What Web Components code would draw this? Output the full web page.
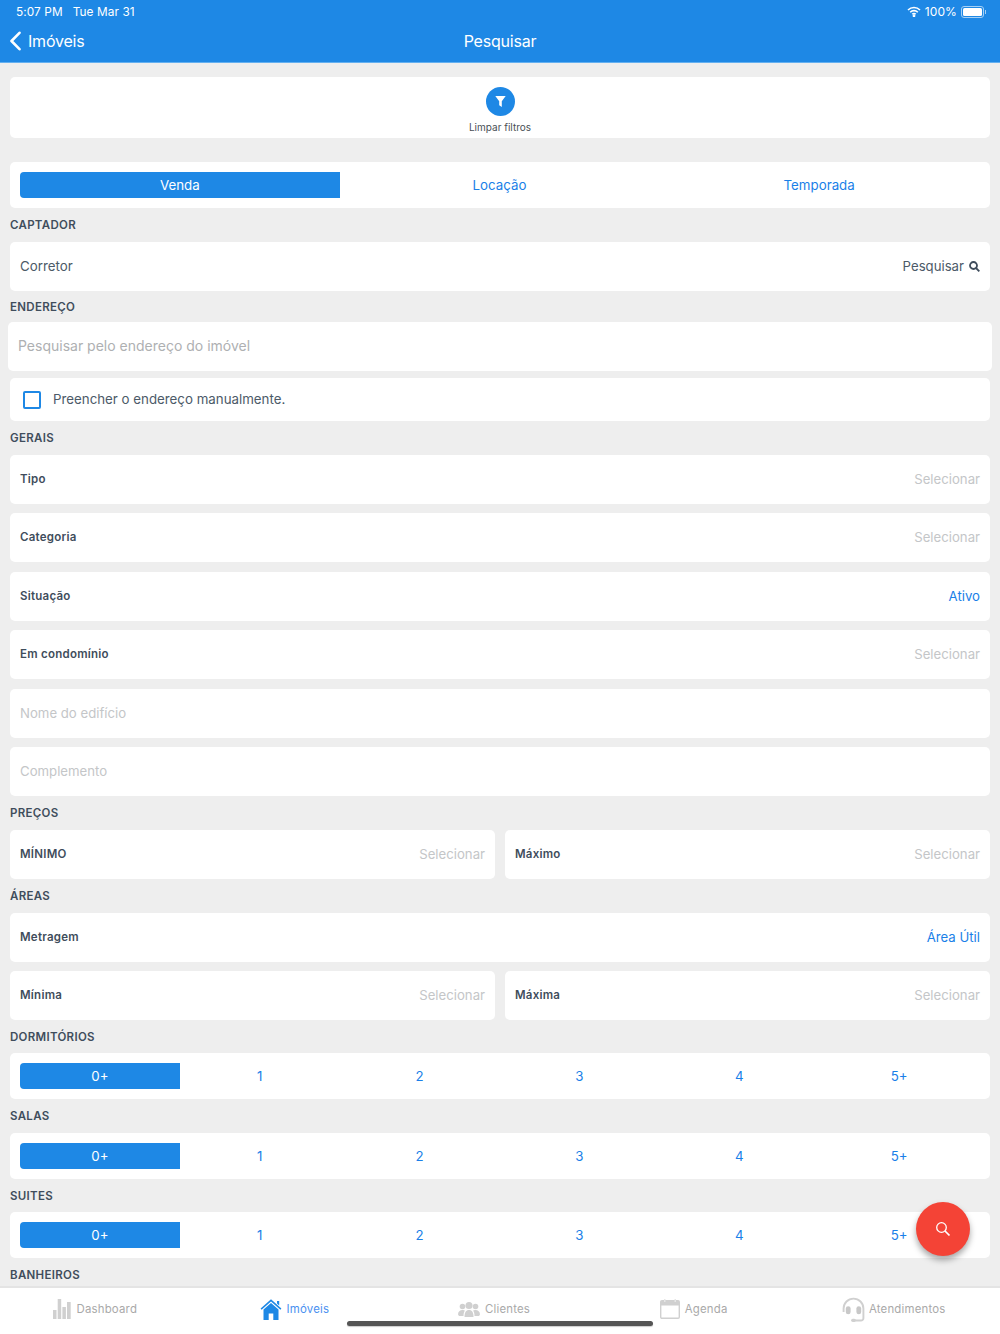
<!DOCTYPE html>
<html lang="pt">
<head>
<meta charset="utf-8">
<title>Pesquisar</title>
<style>
  html, body { margin: 0; padding: 0; height: 100%; background: #eee; }
  body { font-family: Inter, "Liberation Sans", sans-serif; overflow: hidden; }
</style>
</head>
<body>
<search-page></search-page>

<script>
const ICONS = {
  home: `<svg width="22" height="22" viewBox="0 0 22 22"><path d="M0.6 10.6 11 1.2l10.4 9.4-1 1.1L11 3.4 1.6 11.700z" fill="#1e88e5"/><path d="M17 3h2.200v4.500L17 5.500z" fill="#1e88e5"/><path d="M3.500 11.600 11 5l7.500 6.600V22h-5.200v-6.500H8.700V22H3.500z" fill="#1e88e5"/></svg>`,
  chart: `<svg width="19" height="20" viewBox="0 0 19 20" fill="#d0d0d0"><rect x="0" y="11" width="3.500" height="9"/><rect x="4.700" y="0" width="3.500" height="20"/><rect x="9.400" y="8" width="3.500" height="12"/><rect x="14" y="3" width="3.700" height="17"/></svg>`,
  people: `<svg width="22" height="15" viewBox="0 0 22 15" fill="#d0d0d0"><circle cx="4.500" cy="4.500" r="2.800"/><circle cx="17.500" cy="4.500" r="2.800"/><circle cx="11" cy="3.500" r="3.500"/><path d="M0 12.500c0-3 2-4.500 4.500-4.500 1 0 2 .3 2.500.7-1 1-1.500 2.500-1.500 5.300H1zM22 12.500c0-3-2-4.500-4.500-4.500-1 0-2 .3-2.500.7 1 1 1.500 2.500 1.500 5.300H21z"/><path d="M6.500 15c0-4.500 1.500-7 4.500-7s4.500 2.500 4.500 7z"/></svg>`,
  calendar: `<svg width="20" height="20" viewBox="0 0 20 20"><rect x="0.700" y="1.700" width="18.600" height="17.600" rx="1.200" fill="#fff" stroke="#d0d0d0" stroke-width="1.400"/><path d="M0.700 3a1.300 1.300 0 0 1 1.300-1.300h16a1.300 1.300 0 0 1 1.300 1.300v3.500H.7z" fill="#d0d0d0"/><rect x="4" y="0" width="1.500" height="3" fill="#e6e6e6"/><rect x="14.500" y="0" width="1.500" height="3" fill="#e6e6e6"/></svg>`,
  headset: `<svg width="25" height="25" viewBox="0 0 25 26"><path d="M2.200 15.500V12a10.300 10.300 0 0 1 20.600 0v10a2.500 2.500 0 0 1-2.500 2.500H13" fill="none" stroke="#d0d0d0" stroke-width="2"/><rect x="4.500" y="9.500" width="5" height="8.500" rx="2.500" fill="#c8c8c8"/><rect x="15.500" y="9.500" width="5" height="8.500" rx="2.500" fill="#c8c8c8"/><rect x="10" y="22.500" width="5" height="3.500" rx="1.700" fill="#d0d0d0"/></svg>`
};

class StatusNav extends HTMLElement {
  constructor() {
    super();
    this.attachShadow({ mode: 'open' });
    this.shadowRoot.innerHTML = `
      <style>
        :host { display: block; background: #1e88e5; color: #fff; border-bottom: 1px solid #64b0f0; padding-bottom: 3px; }
        .status { display: flex; align-items: center; height: 23px; padding: 0 14px 0 16px; font-size: 11.800px; letter-spacing: .1px; }
        .status .date { margin-left: 10px; }
        .status .right { margin-left: auto; display: flex; align-items: center; gap: 4px; font-size: 12px; }
        .battery { display: flex; align-items: center; }
        .battery i { display: block; box-sizing: border-box; width: 23px; height: 12px; border: 1px solid #a5d0f5; border-radius: 3px; padding: 1px; }
        .battery i::before { content: ""; display: block; height: 100%; background: #fff; border-radius: 1.500px; }
        .battery b { display: block; width: 1px; height: 4px; margin-left: 1px; background: #a5d0f5; }
        .bar { display: grid; grid-template-columns: 1fr auto 1fr; align-items: center; height: 36px; padding: 0 9px; font-size: 16px; letter-spacing: -.2px; }
        .back { display: flex; align-items: center; gap: 6px; }
      </style>
      <div class="status">
        <span>5:07 PM</span><span class="date">Tue Mar 31</span>
        <span class="right">
          <svg width="14" height="11" viewBox="0 0 14 11" fill="none" stroke="#fff" stroke-width="1.600"><path d="M1 4a8.500 8.500 0 0 1 12 0"/><path d="M3.200 6.200a5.400 5.400 0 0 1 7.600 0"/><path d="M5.300 8.300a2.400 2.400 0 0 1 3.400 0"/><circle cx="7" cy="9.800" r=".6" fill="#fff"/></svg>
          <span>100%</span>
          <span class="battery"><i></i><b></b></span>
        </span>
      </div>
      <div class="bar">
        <span class="back">
          <svg width="13" height="20" viewBox="0 0 13 20" fill="none" stroke="#fff" stroke-width="2.600" stroke-linecap="round" stroke-linejoin="round"><path d="M10.500 1.800 2.500 10l8 8.200"/></svg>
          <span>Imóveis</span>
        </span>
        <span>Pesquisar</span>
        <span></span>
      </div>`;
  }
}

class ClearFilters extends HTMLElement {
  constructor() {
    super();
    this.attachShadow({ mode: 'open' });
    this.shadowRoot.innerHTML = `
      <style>
        :host { display: flex; flex-direction: column; align-items: center; box-sizing: border-box; height: 61px; background: #fff; border-radius: 5px; padding-top: 10px; }
        .dot { display: flex; align-items: center; justify-content: center; width: 29px; height: 29px; border-radius: 50%; background: #1e88e5; }
        span { margin-top: 5px; font-size: 10px; color: #4a4f55; }
      </style>
      <div class="dot"><svg width="11" height="11" viewBox="0 0 11 11" fill="#fff"><path d="M.3 0h10.400L6.800 5.200V11L4.200 9.200v-4z"/></svg></div>
      <span>Limpar filtros</span>`;
  }
}

class SegControl extends HTMLElement {
  constructor() {
    super();
    this.attachShadow({ mode: 'open' });
    const items = (this.getAttribute('items') || '').split(',');
    this.shadowRoot.innerHTML = `
      <style>
        :host { display: block; background: #fff; border-radius: 5px; padding: 10px 11px 10px 10px; height: 46px; box-sizing: border-box; }
        .wrap { display: grid; grid-auto-flow: column; grid-auto-columns: 1fr; height: 26px; }
        .wrap div { display: flex; align-items: center; justify-content: center; font-size: 13.300px; color: #1a7fe8; }
        .wrap div:first-child { background: #1e88e5; color: #fff; border-radius: 4px 0 0 4px; }
      </style>
      <div class="wrap">${items.map(t => `<div>${t}</div>`).join('')}</div>`;
  }
}

class SectionLabel extends HTMLElement {
  constructor() {
    super();
    this.attachShadow({ mode: 'open' });
    this.shadowRoot.innerHTML = `
      <style>
        :host { display: flex; align-items: center; height: 34px; font-size: 11.500px; font-weight: 600; color: #3f4d5c; letter-spacing: .3px; }
      </style>
      <slot></slot>`;
  }
}

class FormRow extends HTMLElement {
  constructor() {
    super();
    this.attachShadow({ mode: 'open' });
    this.shadowRoot.innerHTML = `
      <style>
        :host { display: flex; align-items: center; justify-content: space-between; box-sizing: border-box; height: 49px; padding: 0 10px 1px; background: #fff; border-radius: 5px; min-width: 0; }
        ::slotted([slot=name]) { font-size: 11.500px; font-weight: 600; color: #3f4d5c; letter-spacing: .25px; }
        ::slotted([slot=value]) { font-size: 13.200px; color: #c4c6c8; }
        ::slotted(.link) { color: #1a7fe8; }
      </style>
      <slot name="name"></slot>
      <slot name="value"></slot>`;
  }
}

class SearchPage extends HTMLElement {
  constructor() {
    super();
    this.attachShadow({ mode: 'open' });
    const row = (name, value = 'Selecionar', cls = '') =>
      `<form-row><span slot="name">${name}</span><span slot="value" class="${cls}">${value}</span></form-row>`;
    const hint = text =>
      `<form-row><span slot="name" class="hint">${text}</span></form-row>`;
    const tab = (icon, label, cls = '') =>
      `<div class="tab ${cls}">${ICONS[icon]}<span>${label}</span></div>`;
    const nums = '0+,1,2,3,4,5+';

    this.shadowRoot.innerHTML = `
      <style>
        :host { display: flex; flex-direction: column; position: relative; height: 1334px; background: #eee; }
        main { flex: 1; min-height: 0; overflow: hidden; padding: 14px 10px 0; }
        clear-filters { margin-bottom: 24px; }
        .stack { display: flex; flex-direction: column; gap: 9.400px; }
        .pair { display: grid; grid-template-columns: 1fr 1fr; gap: 10px; }
        .corretor { font-size: 13.300px; font-weight: 400; color: #4c5a68; letter-spacing: 0; }
        .label-tight { height: 31px; }
        .label-first { height: 33px; }
        .label-seg { height: 33.500px; }
        .address { display: flex; align-items: center; box-sizing: border-box; height: 49px; margin: 0 -2px; padding: 0 10px 2px; background: #fff; border-radius: 5px; font-size: 14px; color: #aeb0b2; }
        .manual { display: flex; align-items: center; gap: 12px; box-sizing: border-box; height: 43px; margin-top: 7px; padding: 0 13px 2px; background: #fff; border-radius: 5px; font-size: 13.300px; color: #4c5a68; }
        .box { box-sizing: border-box; width: 18px; height: 18px; margin-top: 2px; border: 2px solid #1e88e5; border-radius: 2px; }
        .hint { font-size: 13.200px; font-weight: 400; color: #c4c6c8; letter-spacing: 0; }
        .pesq { display: inline-flex; align-items: center; gap: 5px; color: #4c5a68; }
        .pesq svg { margin-top: 1px; }
        nav { display: grid; grid-template-columns: repeat(5, 1fr); box-sizing: border-box; width: 998px; height: 46px; margin-left: -5px; background: #fff; }
        .bar-wrap { background: #fff; border-top: 2px solid #e4e4e4; overflow: hidden; }
        .tab { display: flex; align-items: center; justify-content: center; gap: 5px; height: 42px; font-size: 11.400px; color: #a9a9a9; }
        .tab.on { color: #4a90f0; }
        .tab span { letter-spacing: .2px; }
        .tab.tight { gap: 3px; }
        .home { position: absolute; left: 347px; top: 1321px; width: 306px; height: 5px; border-radius: 3px; background: #555; box-shadow: 0 1px 1px rgba(0,0,0,.2); }
        .fab { position: absolute; left: 916px; top: 1202px; display: flex; align-items: center; justify-content: center; width: 54px; height: 54px; border-radius: 50%; background: #f44336; box-shadow: 0 4px 6px rgba(0,0,0,.35); }
      </style>
      <status-nav></status-nav>
      <main>
        <clear-filters></clear-filters>
        <seg-control items="Venda,Locação,Temporada"></seg-control>

        <section-label>CAPTADOR</section-label>
        <form-row>
          <span slot="name" class="corretor">Corretor</span>
          <span slot="value" class="pesq">Pesquisar
            <svg width="11" height="11" viewBox="0 0 11 11" fill="none" stroke="#3f4d5c" stroke-width="1.800"><circle cx="4.500" cy="4.500" r="3.500"/><path d="M7 7l3.300 3.300"/></svg>
          </span>
        </form-row>

        <section-label class="label-tight">ENDEREÇO</section-label>
        <div class="address">Pesquisar pelo endereço do imóvel</div>
        <div class="manual"><div class="box"></div>Preencher o endereço manualmente.</div>

        <section-label>GERAIS</section-label>
        <div class="stack">
          ${row('Tipo')}
          ${row('Categoria')}
          ${row('Situação', 'Ativo', 'link')}
          ${row('Em condomínio')}
          ${hint('Nome do edifício')}
          ${hint('Complemento')}
        </div>

        <section-label>PREÇOS</section-label>
        <div class="pair">${row('MÍNIMO')}${row('Máximo')}</div>

        <section-label>ÁREAS</section-label>
        <div class="stack">
          ${row('Metragem', 'Área Útil', 'link')}
          <div class="pair">${row('Mínima')}${row('Máxima')}</div>
        </div>

        <section-label class="label-first">DORMITÓRIOS</section-label>
        <seg-control items="${nums}"></seg-control>
        <section-label class="label-seg">SALAS</section-label>
        <seg-control items="${nums}"></seg-control>
        <section-label class="label-seg">SUITES</section-label>
        <seg-control items="${nums}"></seg-control>
        <section-label class="label-seg">BANHEIROS</section-label>
      </main>
      <div class="bar-wrap">
        <nav>
          ${tab('chart', 'Dashboard')}
          ${tab('home', 'Imóveis', 'on')}
          ${tab('people', 'Clientes')}
          ${tab('calendar', 'Agenda')}
          ${tab('headset', 'Atendimentos', 'tight')}
        </nav>
      </div>
      <div class="fab">
        <svg width="16" height="16" viewBox="0 0 16 16" fill="none" stroke="#fff" stroke-width="1.300"><circle cx="6.500" cy="6.500" r="4.800"/><path d="M10 10l4.500 4.500" stroke-width="1.700"/></svg>
      </div>
      <div class="home"></div>`;
  }
}

customElements.define('status-nav', StatusNav);
customElements.define('clear-filters', ClearFilters);
customElements.define('seg-control', SegControl);
customElements.define('section-label', SectionLabel);
customElements.define('form-row', FormRow);
customElements.define('search-page', SearchPage);
</script>
</body>
</html>
